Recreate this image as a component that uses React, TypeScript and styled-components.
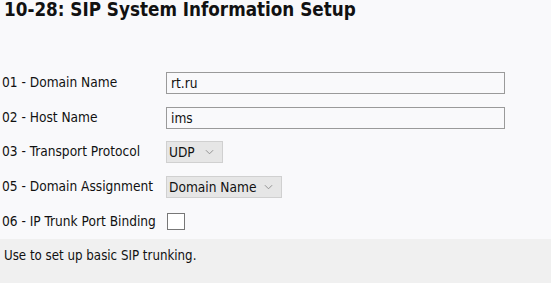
import styled, { createGlobalStyle } from 'styled-components';

const GlobalStyle = createGlobalStyle`
  html, body {
    margin: 0;
    padding: 0;
    background: #f9f9fb;
  }
  body {
    font-family: 'DejaVu Sans Condensed', 'DejaVu Sans', sans-serif;
    font-size: 13.6px;
    color: #111;
  }
`;

const fields = [
  { id: '01', label: 'Domain Name', kind: 'text', value: 'rt.ru' },
  { id: '02', label: 'Host Name', kind: 'text', value: 'ims' },
  { id: '03', label: 'Transport Protocol', kind: 'select', value: 'UDP', width: 57 },
  { id: '05', label: 'Domain Assignment', kind: 'select', value: 'Domain Name', width: 116 },
  { id: '06', label: 'IP Trunk Port Binding', kind: 'check', value: '' },
];

const Chevron = () => (
  <ChevronSvg viewBox="0 0 10 6" width={9} height={6}>
    <path d="M1 1l4 4 4-4" fill="none" stroke="#8a8a8a" strokeWidth={1} />
  </ChevronSvg>
);

const App = () => {
  return (
    <Page>
      <GlobalStyle />
      <Title>10-28: SIP System Information Setup</Title>
      <Form>
        {fields.map((f) => (
          <Row key={f.id}>
            <Label>
              {f.id} - {f.label}
            </Label>
            {f.kind === 'text' && <TextInput defaultValue={f.value} />}
            {f.kind === 'select' && (
              <SelectWrap $width={f.width || 60}>
                <Select defaultValue={f.value}>
                  <option>{f.value}</option>
                </Select>
                <Chevron />
              </SelectWrap>
            )}
            {f.kind === 'check' && <Check type="checkbox" />}
          </Row>
        ))}
      </Form>
      <Footer>Use to set up basic SIP trunking.</Footer>
    </Page>
  );
};

export default App;

const Page = styled.div`
  height: 283px;
  display: flex;
  flex-direction: column;
`;

const Title = styled.h1`
  margin: 0;
  padding: 0 0 0 4px;
  font-family: 'DejaVu Sans Condensed', 'DejaVu Sans', sans-serif;
  font-weight: bold;
  font-size: 18.7px;
  line-height: 19px;
  color: #111;
`;

const Form = styled.div`
  padding: 47px 0 0 2px;
  display: flex;
  flex-direction: column;
`;

const Row = styled.div`
  display: grid;
  grid-template-columns: 164px 1fr;
  align-items: center;
  height: 34.6px;
`;

const Label = styled.span`
  white-space: nowrap;
  line-height: 16px;
  padding-bottom: 2px;
`;

const TextInput = styled.input`
  box-sizing: border-box;
  width: 339px;
  height: 22px;
  margin: 0;
  padding: 0 4px;
  border: 1px solid #9a9a9a;
  background: #f9f9fb;
  font: inherit;
  color: #111;
  outline: none;
`;

const SelectWrap = styled.div<{ $width: number }>`
  position: relative;
  width: ${(p) => p.$width}px;
  height: 22px;
`;

const Select = styled.select`
  box-sizing: border-box;
  appearance: none;
  width: 100%;
  height: 100%;
  margin: 0;
  padding: 0 0 0 2px;
  border: 1px solid #d0d0d0;
  border-radius: 0;
  background: #e6e6e6;
  font: inherit;
  color: #111;
  outline: none;
`;

const ChevronSvg = styled.svg`
  position: absolute;
  right: 9px;
  top: 8px;
  pointer-events: none;
`;

const Check = styled.input`
  appearance: none;
  box-sizing: border-box;
  width: 18px;
  height: 17px;
  margin: 0 0 0 1px;
  border: 1px solid #777;
  background: #fff;
`;

const Footer = styled.div`
  flex: 1;
  background: #f0f0f0;
  padding: 9px 4px;
  font-size: 13.2px;
`;
